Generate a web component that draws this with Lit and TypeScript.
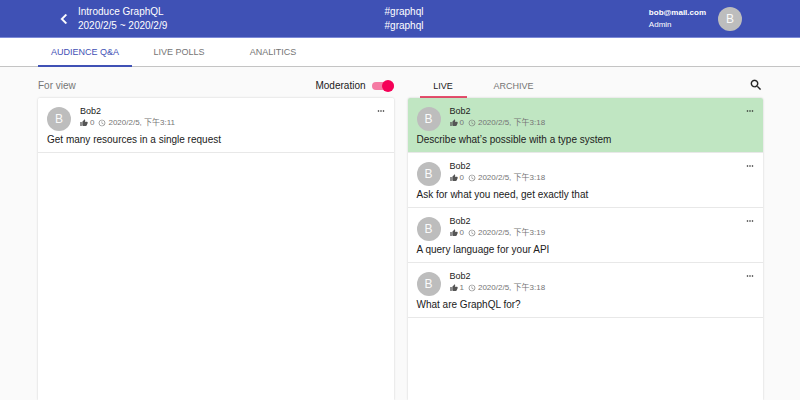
import { LitElement, html, css, svg } from "lit";
import { customElement, property, state } from "lit/decorators.js";
import { classMap } from "lit/directives/class-map.js";

interface Question {
  author: string;
  likes: number;
  time: string;
  text: string;
  pinned?: boolean;
}

const forReview: Question[] = [
  { author: "Bob2", likes: 0, time: "2020/2/5, 下午3:11", text: "Get many resources in a single request" },
];

const live: Question[] = [
  { author: "Bob2", likes: 0, time: "2020/2/5, 下午3:18", text: "Describe what’s possible with a type system", pinned: true },
  { author: "Bob2", likes: 0, time: "2020/2/5, 下午3:18", text: "Ask for what you need, get exactly that" },
  { author: "Bob2", likes: 0, time: "2020/2/5, 下午3:19", text: "A query language for your API" },
  { author: "Bob2", likes: 1, time: "2020/2/5, 下午3:18", text: "What are GraphQL for?" },
];

const icons = {
  back: svg`<path d="M15.41 7.41 14 6l-6 6 6 6 1.41-1.41L10.83 12z" stroke="currentColor" stroke-width="0.4"/>`,
  search: svg`<path d="M15.5 14h-.79l-.28-.27C15.41 12.59 16 11.11 16 9.5 16 5.91 13.09 3 9.5 3S3 5.91 3 9.5 5.91 16 9.5 16c1.61 0 3.09-.59 4.23-1.57l.27.28v.79l5 4.99L20.49 19l-4.99-5zm-6 0C7.01 14 5 11.99 5 9.5S7.01 5 9.5 5 14 7.01 14 9.5 11.99 14 9.5 14z" stroke="currentColor" stroke-width="0.4"/>`,
  more: svg`<path d="M6 10c-1.1 0-2 .9-2 2s.9 2 2 2 2-.9 2-2-.9-2-2-2zm12 0c-1.1 0-2 .9-2 2s.9 2 2 2 2-.9 2-2-.9-2-2-2zm-6 0c-1.1 0-2 .9-2 2s.9 2 2 2 2-.9 2-2-.9-2-2-2z"/>`,
  like: svg`<path d="M1 21h4V9H1v12zm22-11c0-1.1-.9-2-2-2h-6.31l.95-4.57.03-.32c0-.41-.17-.79-.44-1.06L14.17 1 7.59 7.59C7.22 7.95 7 8.45 7 9v10c0 1.1.9 2 2 2h9c.83 0 1.54-.5 1.84-1.22l3.02-7.05c.09-.23.14-.47.14-.73v-2z"/>`,
  clock: svg`<path d="M11.99 2C6.47 2 2 6.48 2 12s4.47 10 9.99 10C17.52 22 22 17.52 22 12S17.52 2 11.99 2zM12 20c-4.42 0-8-3.58-8-8s3.58-8 8-8 8 3.58 8 8-3.58 8-8 8zm.5-13H11v6l5.25 3.15.75-1.23-4.5-2.67z"/>`,
};

const icon = (name: keyof typeof icons) =>
  html`<svg class="icon ${name}" viewBox="0 0 24 24" fill="currentColor" aria-hidden="true">${icons[name]}</svg>`;

const shared = css`
  * {
    box-sizing: border-box;
  }
  button {
    margin: 0;
    padding: 0;
    border: 0;
    background: none;
    color: inherit;
    font: inherit;
    cursor: pointer;
  }
  .icon {
    display: block;
    flex: none;
  }
  .avatar {
    display: flex;
    align-items: center;
    justify-content: center;
    flex: none;
    width: 24px;
    height: 24px;
    border-radius: 50%;
    background: #bdbdbd;
    color: #fafafa;
    font-size: 12px;
    line-height: 16px;
  }
`;

@customElement("question-card")
export class QuestionCard extends LitElement {
  @property({ attribute: false }) question!: Question;

  static styles = [
    shared,
    css`
      :host {
        display: block;
      }
      .card {
        padding: 7px 8px 6px 9px;
        border-bottom: 1px solid #e8e8e8;
        background: #fff;
      }
      .pinned {
        background: #c0e6c2;
      }
      .head {
        display: flex;
      }
      .head .avatar {
        margin-top: 2px;
      }
      .info {
        flex: 1;
        margin-left: 9px;
        font-size: 9px;
        line-height: 12px;
      }
      .meta {
        display: flex;
        align-items: center;
        height: 12px;
        color: #757575;
        font-size: 8px;
      }
      .like {
        width: 8px;
        height: 8px;
        margin-right: 2px;
        color: #555;
      }
      .clock {
        width: 8px;
        height: 8px;
        margin: 0 2px 0 4px;
      }
      .more {
        width: 10px;
        height: 10px;
      }
      .menu {
        align-self: flex-start;
        padding-top: 1px;
      }
      .text {
        margin: 3px 0 0;
        font-size: 10px;
        line-height: 12px;
      }
    `,
  ];

  render() {
    const q = this.question;
    return html`
      <article class=${classMap({ card: true, pinned: !!q.pinned })}>
        <div class="head">
          <div class="avatar">${q.author[0]}</div>
          <div class="info">
            <div>${q.author}</div>
            <div class="meta">${icon("like")}<span>${q.likes}</span>${icon("clock")}<time>${q.time}</time></div>
          </div>
          <button class="menu" aria-label="More actions">${icon("more")}</button>
        </div>
        <p class="text">${q.text}</p>
      </article>
    `;
  }
}

@customElement("app-root")
export class AppRoot extends LitElement {
  @state() private section = "AUDIENCE Q&A";
  @state() private list = "LIVE";
  @state() private moderation = true;

  static styles = [
    shared,
    css`
      :host {
        display: flex;
        flex-direction: column;
        min-height: 100vh;
        background: #fafafa;
        color: #212121;
        font-family: "Liberation Sans", "Noto Sans CJK TC", sans-serif;
        font-size: 10px;
        line-height: 14px;
      }
      .bar {
        display: grid;
        grid-template-columns: 1fr auto 1fr;
        align-items: center;
        height: 38px;
        padding: 0 58px 0 54px;
        border-bottom: 1px solid #7c8ad8;
        background: #3f51b5;
        color: #fff;
      }
      .event {
        display: flex;
        align-items: center;
        gap: 4px;
      }
      .back {
        width: 20px;
        height: 20px;
      }
      .user {
        display: flex;
        align-items: center;
        justify-content: flex-end;
        gap: 12px;
        font-size: 8px;
        line-height: 12px;
      }
      .name {
        font-weight: bold;
      }
      .codes {
        padding-left: 12px;
      }
      .sections {
        display: flex;
        height: 29px;
        padding-left: 38px;
        border-bottom: 1px solid #c4c4c4;
        background: #fff;
      }
      .tab {
        border-bottom: 2px solid transparent;
        color: #757575;
        font-size: 9px;
      }
      .sections .tab {
        width: 94px;
        margin-bottom: -1px;
      }
      .sections .active {
        border-color: #3f51b5;
        color: #3f51b5;
      }
      .columns {
        flex: 1;
        display: grid;
        grid-template-columns: 1fr 1fr;
        gap: 14px;
        padding: 0 37px 0 38px;
      }
      .column {
        display: flex;
        flex-direction: column;
      }
      .tools {
        display: flex;
        align-items: center;
        height: 31px;
        padding-top: 7px;
      }
      .heading {
        margin: 0;
        flex: 1;
        color: #757575;
        font: inherit;
      }
      .moderation {
        display: flex;
        align-items: center;
        gap: 6px;
      }
      .switch {
        appearance: none;
        display: flex;
        align-items: center;
        width: 22px;
        height: 8px;
        margin: 0;
        border-radius: 4px;
        background: #bdbdbd;
        cursor: pointer;
      }
      .switch::before {
        content: "";
        width: 12px;
        height: 12px;
        flex: none;
        border-radius: 50%;
        background: #fafafa;
      }
      .switch:checked {
        justify-content: flex-end;
        background: #f57aa3;
      }
      .switch:checked::before {
        background: #f50057;
      }
      .lists {
        display: flex;
        flex: 1;
        padding-left: 12px;
        align-self: stretch;
      }
      .lists .tab {
        width: 47px;
        margin-right: 12px;
        padding-top: 2px;
      }
      .lists .tab + .tab {
        width: 70px;
      }
      .lists .active {
        border-color: #e8506f;
        color: #212121;
      }
      .search {
        width: 14px;
        height: 14px;
        margin-bottom: 2px;
      }
      .panel {
        flex: 1;
        overflow: hidden;
        border-radius: 2px 2px 0 0;
        background: #fff;
        box-shadow: 0 0 2px rgba(0, 0, 0, 0.22);
      }
    `,
  ];

  private tabs(names: string[], current: string, pick: (name: string) => void) {
    return names.map(
      (name) => html`<button
        class=${classMap({ tab: true, active: name === current })}
        role="tab"
        aria-selected=${name === current}
        @click=${() => pick(name)}
      >${name}</button>`,
    );
  }

  render() {
    return html`
      <header class="bar">
        <div class="event">
          <button aria-label="Back">${icon("back")}</button>
          <div>
            <div>Introduce GraphQL</div>
            <div>2020/2/5 ~ 2020/2/9</div>
          </div>
        </div>
        <div class="codes">
          <div>#graphql</div>
          <div>#graphql</div>
        </div>
        <div class="user">
          <div>
            <div class="name">bob@mail.com</div>
            <div>Admin</div>
          </div>
          <div class="avatar">B</div>
        </div>
      </header>
      <nav class="sections" role="tablist">
        ${this.tabs(["AUDIENCE Q&A", "LIVE POLLS", "ANALITICS"], this.section, (n) => (this.section = n))}
      </nav>
      <main class="columns">
        <section class="column">
          <div class="tools">
            <h2 class="heading">For view</h2>
            <label class="moderation">
              Moderation
              <input
                class="switch"
                type="checkbox"
                role="switch"
                .checked=${this.moderation}
                @change=${(e: Event) => (this.moderation = (e.target as HTMLInputElement).checked)}
              />
            </label>
          </div>
          <div class="panel">
            ${forReview.map((q) => html`<question-card .question=${q}></question-card>`)}
          </div>
        </section>
        <section class="column">
          <div class="tools">
            <div class="lists" role="tablist">
              ${this.tabs(["LIVE", "ARCHIVE"], this.list, (n) => (this.list = n))}
            </div>
            <button aria-label="Search">${icon("search")}</button>
          </div>
          <div class="panel">
            ${live.map((q) => html`<question-card .question=${q}></question-card>`)}
          </div>
        </section>
      </main>
    `;
  }
}
